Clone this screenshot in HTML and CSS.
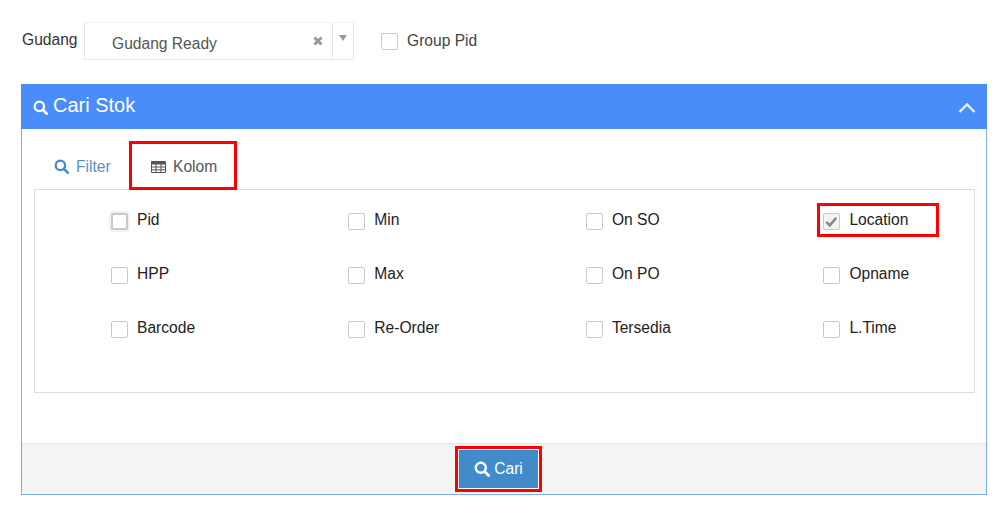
FILE: index.html
```html
<!DOCTYPE html>
<html lang="id">
<head>
<meta charset="utf-8">
<title>Cari Stok</title>
<link rel="stylesheet" href="styles.css">
</head>
<body>
<svg class="defs" width="0" height="0" aria-hidden="true">
  <symbol id="i-search" viewBox="0 0 16 16"><circle cx="6.8" cy="6.8" r="5" fill="none" stroke="currentColor" stroke-width="2.4"/><path d="M10.6 10.6l4 4" fill="none" stroke="currentColor" stroke-width="2.8" stroke-linecap="round"/></symbol>
</svg>
<div class="toolbar">
  <span class="field-label">Gudang</span>
  <div class="select">
    <span class="select-value">Gudang Ready</span>
    <svg class="select-clear" viewBox="0 0 10 10"><path d="M1.5 1.5l7 7M8.5 1.5l-7 7" stroke="#999" stroke-width="3" fill="none"/></svg>
    <span class="select-arrow"><i class="caret"></i></span>
  </div>
  <label class="check check-top"><span class="box"></span><span>Group Pid</span></label>
</div>
<section class="panel">
  <header class="panel-head">
    <h2 class="panel-title"><svg class="title-icon"><use href="#i-search"/></svg>Cari Stok</h2>
    <svg class="chevron" viewBox="0 0 18 12"><path d="M1.5 10L9 2.5 16.5 10" fill="none" stroke="#fff" stroke-opacity=".85" stroke-width="2.4"/></svg>
  </header>
  <div class="panel-body">
    <nav class="tabs">
      <a class="tab tab-filter"><svg class="tab-icon"><use href="#i-search"/></svg>Filter</a>
      <a class="tab tab-kolom mark">
        <svg class="table-icon" viewBox="0 0 15 12"><path d="M.5.5h14v11H.5z" fill="none" stroke="#555"/><path d="M.5 1h14v2.5H.5z" fill="#555"/><path d="M0 6h15M0 8.8h15M5 3v9M10 3v9" stroke="#555" fill="none"/></svg>
        Kolom
      </a>
    </nav>
    <div class="tab-content">
      <div class="grid">
        <label class="check"><span class="box box-focus"></span><span>Pid</span></label>
        <label class="check"><span class="box"></span><span>Min</span></label>
        <label class="check"><span class="box"></span><span>On SO</span></label>
        <label class="check check-mark"><span class="box box-checked"><svg viewBox="0 0 16 16" class="tick"><path d="M2.5 8.5l3.6 3.6 7-8" fill="none" stroke="#888" stroke-width="2.6"/></svg></span><span>Location</span></label>
        <label class="check"><span class="box"></span><span>HPP</span></label>
        <label class="check"><span class="box"></span><span>Max</span></label>
        <label class="check"><span class="box"></span><span>On PO</span></label>
        <label class="check"><span class="box"></span><span>Opname</span></label>
        <label class="check"><span class="box"></span><span>Barcode</span></label>
        <label class="check"><span class="box"></span><span>Re-Order</span></label>
        <label class="check"><span class="box"></span><span>Tersedia</span></label>
        <label class="check"><span class="box"></span><span>L.Time</span></label>
      </div>
    </div>
  </div>
  <footer class="panel-foot">
    <button class="btn" type="button"><svg class="btn-icon"><use href="#i-search"/></svg>Cari</button>
  </footer>
</section>
</body>
</html>
```
FILE: styles.css
```css
* { box-sizing: border-box; }
html, body { margin: 0; padding: 0; background: #fff; }
body {
  width: 1008px;
  height: 518px;
  overflow: hidden;
  font: 15.6px/20px "Liberation Sans", Arial, sans-serif;
  color: #222;
  padding: 22px 21px 0;
}
.defs { position: absolute; }

.toolbar { display: flex; align-items: flex-start; height: 62px; }
.field-label { margin: 8px 7px 0 1px; width: 55px; white-space: nowrap; line-height: 20px; color: #333; }
.select {
  display: flex;
  width: 270px;
  height: 38px;
  border: 1px solid #e8e8e8;
  border-top-style: dotted;
  background: #fff;
}
.select-value { flex: 1; padding: 11px 0 0 27px; color: #555; line-height: 20px; }
.select-clear { width: 10px; height: 10px; margin: 13px 9px 0 0; }
.select-arrow { width: 21px; border-left: 1px solid #e8e8e8; display: flex; justify-content: center; padding-top: 12px; }
.caret { width: 0; height: 0; border: 4px solid transparent; border-top: 6px solid #999; border-bottom: 0; }

.check { display: flex; align-items: center; gap: 9px; height: 20px; color: #333; line-height: 20px; }
.check-top { margin: 9px 0 0 27px; color: #444; }
.box { width: 17px; height: 17px; border: 1px solid #c9c9c9; border-radius: 2px; background: #fff; display: block; flex: none; }
.box-focus { box-shadow: 0 0 0 2px #f2f2f2; border-width: 2px; }
.box-checked { background: #f4f4f4; }
.tick { display: block; width: 15px; height: 15px; }

.panel { width: 966px; height: 411px; border: 1px solid #7eadf5; border-top: 0; display: flex; flex-direction: column; }
.panel-head {
  height: 45px;
  flex: none;
  margin: 0 -1px 0 -1px;
  background: #4b8df8;
  color: #fff;
  display: flex;
  align-items: center;
  justify-content: space-between;
  padding: 0 11px 0 12px;
}
.panel-title { margin: 0; font-size: 20px; font-weight: 400; line-height: 24px; display: flex; align-items: center; position: relative; top: -2px; }
.title-icon { width: 15px; height: 15px; margin: 5px 5px 0 0; color: #fff; }
.chevron { width: 18px; height: 12px; margin-top: 2px; }

.panel-body { flex: 1; padding: 12px 11px 0 12px; }
.tabs { display: flex; height: 48px; }
.tab { display: flex; align-items: center; height: 49px; flex: none; }
.tab-filter { width: 95px; padding: 2px 0 0 20px; color: #5b8fc7; }
.tab-icon { width: 15px; height: 15px; margin-right: 7px; color: #428bca; }
.tab-kolom { color: #555; width: 108px; padding: 2px 0 0 22px; position: relative; z-index: 1; }
.table-icon { width: 15px; height: 12px; margin-right: 7px; }
.mark { outline: 3px solid #f00; outline-offset: -3px; }

.tab-content { height: 204px; border: 1px solid #ddd; padding: 20px 0 0 76px; }
.grid { display: grid; grid-template-columns: 237.3px 237.6px 237.5px 1fr; grid-auto-rows: 20px; row-gap: 34px; }
.grid .check { color: #222; }
.grid .box { position: relative; top: 1px; }
.grid .check.check-mark { outline: 3px solid #f00; outline-offset: -3px; width: 122px; height: 34px; margin: -7px 0 0 -6px; padding-left: 6px; }

.panel-foot {
  height: 51px;
  flex: none;
  background: #f4f4f4;
  border-top: 1px solid #e5e5e5;
  display: flex;
  align-items: flex-start;
  padding: 2px 0 0 433px;
}
.btn {
  width: 87px;
  height: 46px;
  padding: 0;
  background: #428bca;
  border: 0;
  color: #fff;
  font: 15.6px/20px "Liberation Sans", Arial, sans-serif;
  display: flex;
  align-items: center;
  justify-content: center;
  box-shadow: inset 0 0 0 3px #f00, inset 0 0 0 4px #fff;
  outline: 0;
}
.btn-icon { width: 16px; height: 16px; margin-right: 4px; color: #fff; }
```
